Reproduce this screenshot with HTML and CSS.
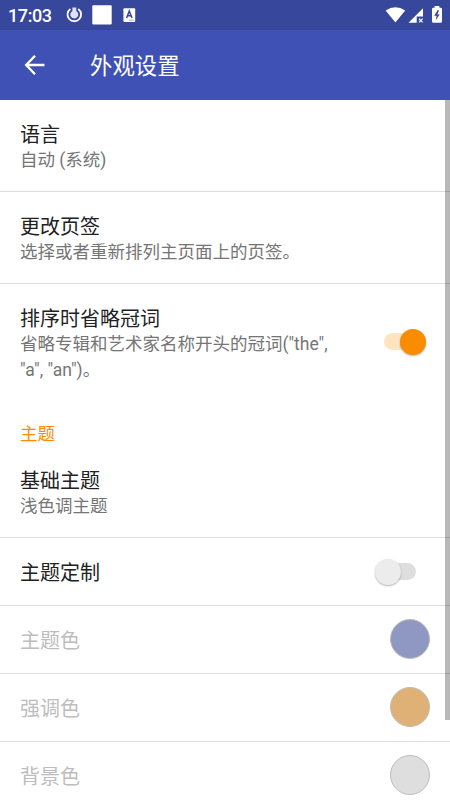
FILE: index.html
```html
<!DOCTYPE html>
<html lang="zh-CN">
<head>
<meta charset="utf-8">
<title>外观设置</title>
<link rel="stylesheet" href="styles.css">
</head>
<body>
<div class="screen">
  <div class="status">
    <span class="clock">17:03</span>
    <svg class="status-left" width="72" height="30" viewBox="0 0 72 30">
      <path d="M5.4 8.9A6.8 6.8 0 1 0 13.2 8.9" fill="none" stroke="#fff" stroke-width="1.8"/>
      <path d="M7.4 7.6h3.8v3.4a4 4 0 1 1-3.8 0z" fill="#dfe3f8"/>
      <rect x="27.3" y="5.3" width="19.4" height="19.2" rx="1" fill="#fff"/>
      <rect x="58.4" y="8.3" width="11.8" height="13.7" rx="1" fill="#fff"/>
      <path d="M61.6 18l2.7-7 2.7 7M62.5 15.8h3.6" fill="none" stroke="#34459b" stroke-width="1.5"/>
      <path d="M64 20.2h5" stroke="#a9b0d8" stroke-width="1"/>
    </svg>
    <svg class="status-right" width="60" height="30" viewBox="0 0 60 30">
      <path d="M.6 10.4Q10.4 4 20.2 10.4L10.4 22.6z" fill="#fff"/>
      <path d="M38 8.3V16.6H31.7V22.8H23.5z" fill="#fff"/>
      <path d="M34 18.6l3.6 3.8M37.6 18.6L34 22.4" stroke="#fff" stroke-width="1.2"/>
      <path d="M49.6 6.1h4.8v1.6h1.2q1.4 0 1.4 1.4v12.2q0 1.5-1.4 1.5h-7.2q-1.4 0-1.4-1.5V9.1q0-1.4 1.4-1.4h1.2z" fill="#fff"/>
      <path d="M52.5 10.2l-3.3 5.6h2.4l-.8 4.5 3.8-5.9h-2.2l1.6-4.2z" fill="#34459b"/>
    </svg>
  </div>
  <header class="bar">
    <svg class="back" width="22" height="22" viewBox="0 0 22 22" fill="none" stroke="#fff" stroke-width="2.4"><path d="M11 1.7L2.2 11l8.8 9.3M2.2 11H20.5"/></svg>
    <h1>外观设置</h1>
  </header>
  <main class="list">
    <section class="row line"><div><h2>语言</h2><p>自动 (系统)</p></div></section>
    <section class="row line"><div><h2>更改页签</h2><p>选择或者重新排列主页面上的页签。</p></div></section>
    <section class="row tall"><div><h2>排序时省略冠词</h2><p>省略专辑和艺术家名称开头的冠词("the",<br>"a", "an")。</p></div><span class="switch on"></span></section>
    <h3>主题</h3>
    <section class="row line"><div><h2>基础主题</h2><p>浅色调主题</p></div></section>
    <section class="row short line"><h2>主题定制</h2><span class="switch"></span></section>
    <section class="row short line disabled"><h2>主题色</h2><span class="swatch primary"></span></section>
    <section class="row short line disabled"><h2>强调色</h2><span class="swatch accent"></span></section>
    <section class="row short line disabled"><h2>背景色</h2><span class="swatch ground"></span></section>
    <div class="scrollbar"></div>
  </main>
</div>
</body>
</html>
```
FILE: styles.css
```css
* { box-sizing: border-box; }
body, h1, h2, h3, p { margin: 0; font-weight: 400; }
body { font-family: Roboto, "Noto Sans CJK SC", sans-serif; background: #fff; }
.screen { width: 450px; height: 800px; overflow: hidden; display: flex; flex-direction: column; }
.status { height: 30px; flex: none; background: #37479b; display: flex; padding: 0 8px; align-items: center; color: #fff; }
.clock { width: 50px; font-size: 18px; font-weight: 500; line-height: 30px; letter-spacing: -.4px; padding-top: 2px; }
.status-left { margin-left: 7px; }
.status-right { margin-left: auto; margin-right: -3px; }
.bar { height: 70px; flex: none; background: #3f51b5; color: #fff; display: flex; align-items: center; padding-left: 24px; }
.back { flex: none; }
h1 { margin-left: 44px; padding-top: 2px; font-size: 22.4px; line-height: 32px; }
.list { position: relative; flex: 1; min-height: 0; overflow: hidden; }
.row { height: 92px; padding: 23px 20px 0 20px; display: flex; justify-content: space-between; }
.line { border-bottom: 1px solid #dcdcdc; }
.tall { height: 120px; }
h2 { font-size: 20px; line-height: 25px; color: #212121; }
p { margin-top: -1px; font-size: 17.5px; line-height: 26.4px; color: #757575; white-space: nowrap; }
h3 { height: 42px; padding: 17px 0 0 20px; font-size: 17.5px; line-height: 26px; color: #fb8c00; }
.short { height: 68px; padding-top: 0; align-items: center; }
.short h2 { padding-top: 4px; }
.disabled h2 { color: #bdbdbd; }
.swatch { width: 40px; height: 40px; margin-bottom: 1px; border-radius: 50%; border: 1px solid #bdbdbd; }
.primary { background: #8f98c3; }
.accent { background: #dfb176; }
.ground { background: #dedede; }
.switch { position: relative; width: 32px; height: 17px; border-radius: 9px; background: #dedede; margin-right: 14px; }
.switch::after { content: ""; position: absolute; width: 26px; height: 26px; left: -9.5px; top: -4.5px; border-radius: 50%; background: #ececec; box-shadow: 0 1px 2px rgba(0,0,0,.3); }
.on { background: #ffe4c2; margin-top: 26px; }
.on::after { left: auto; right: -10px; background: #fb8c00; }
.scrollbar { position: absolute; top: 0; right: 0; width: 5px; height: 620px; background: rgba(0,0,0,.28); }
```
